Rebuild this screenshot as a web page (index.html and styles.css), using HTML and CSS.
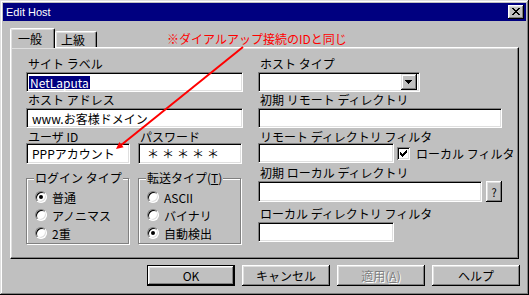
FILE: index.html
```html
<!DOCTYPE html>
<html lang="ja">
<head>
<meta charset="utf-8">
<title>Edit Host</title>
<link rel="stylesheet" href="styles.css">
</head>
<body>
<div class="window">
  <div class="titlebar">
    <span class="title">Edit Host</span>
    <span class="close-btn">
      <svg width="16" height="14" viewBox="0 0 16 14"><path fill="#000" d="M4 3h2v1h-2z M10 3h2v1h-2z M5 4h2v1h-2z M9 4h2v1h-2z M6 5h4v1h-4z M7 6h2v1h-2z M6 7h4v1h-4z M5 8h2v1h-2z M9 8h2v1h-2z M4 9h2v1h-2z M10 9h2v1h-2z"/></svg>
    </span>
  </div>
  <div class="client">
    <div class="tabs">
      <div class="tab tab-active">一般</div>
      <div class="tab tab-inactive">上級</div>
      <div class="note">※ダイアルアップ接続のIDと同じ</div>
    </div>
    <div class="panel">
      <div class="col">
        <div class="label">サイト ラベル</div>
        <div class="field"><span class="selected">NetLaputa</span></div>
        <div class="label">ホスト アドレス</div>
        <div class="field">www.お客様ドメイン</div>
        <div class="pair">
          <div class="label label-short half">ユーザ ID</div>
          <div class="label label-short half">パスワード</div>
        </div>
        <div class="pair">
          <div class="field field-tall half">PPPアカウント</div>
          <div class="field field-tall half password">＊＊＊＊＊</div>
        </div>
        <div class="pair groups">
          <div class="group half">
            <span class="group-title">ログイン タイプ</span>
            <div class="options">
              <div class="option"><span class="radio checked"></span>普通</div>
              <div class="option"><span class="radio"></span>アノニマス</div>
              <div class="option"><span class="radio"></span>2重</div>
            </div>
          </div>
          <div class="group half">
            <span class="group-title">転送タイプ(<u>T</u>)</span>
            <div class="options">
              <div class="option"><span class="radio"></span>ASCII</div>
              <div class="option"><span class="radio"></span>バイナリ</div>
              <div class="option"><span class="radio checked"></span>自動検出</div>
            </div>
          </div>
        </div>
      </div>
      <div class="col">
        <div class="label">ホスト タイプ</div>
        <div class="field combo">
          <span class="combo-btn">
            <svg width="16" height="16" viewBox="0 0 16 16"><path fill="#000" d="M4 6h7v1h-7z M5 7h5v1h-5z M6 8h3v1h-3z M7 9h1v1h-1z"/></svg>
          </span>
        </div>
        <div class="label">初期 リモート ディレクトリ</div>
        <div class="field"></div>
        <div class="label label-short">リモート ディレクトリ フィルタ</div>
        <div class="inline-row">
          <div class="field short"></div>
          <span class="checkbox">
            <svg width="13" height="13" viewBox="0 0 13 13"><path fill="#000" d="M9 3h1v1h-1z M8 4h2v1h-2z M3 5h1v1h-1z M7 5h3v1h-3z M3 6h2v1h-2z M6 6h3v1h-3z M3 7h5v1h-5z M4 8h3v1h-3z M5 9h1v1h-1z"/></svg>
          </span>
          <span class="check-label">ローカル フィルタ</span>
        </div>
        <div class="label label-gap">初期 ローカル ディレクトリ</div>
        <div class="inline-row">
          <div class="field local-dir"></div>
          <span class="btn small-btn">?</span>
        </div>
        <div class="label label-gap2">ローカル ディレクトリ フィルタ</div>
        <div class="field short"></div>
      </div>
    </div>
    <div class="buttons">
      <span class="btn btn-default">OK</span>
      <span class="btn">キャンセル</span>
      <span class="btn btn-disabled">適用(<u>A</u>)</span>
      <span class="btn">ヘルプ</span>
    </div>
  </div>
  <svg class="annotation-arrow" width="529" height="295" viewBox="0 0 529 295">
    <line x1="243" y1="47" x2="121.5" y2="144.7" stroke="#ff0000" stroke-width="2"/>
    <polygon points="116,149 123.6,147.2 119.4,141.9" fill="#ff0000"/>
  </svg>
</div>
</body>
</html>
```

FILE: styles.css
```css
* { box-sizing: border-box; }
html, body { margin: 0; padding: 0; }
body {
  width: 529px;
  height: 295px;
  overflow: hidden;
  background: #c0c0c0;
  font-family: "Noto Sans CJK JP", "Noto Sans", sans-serif;
  font-size: 12px;
  color: #000;
}
.window {
  position: relative;
  width: 529px;
  height: 295px;
  padding: 3px;
  background: #c0c0c0;
  box-shadow: inset -1px -1px #000, inset 1px 1px #dfdfdf, inset -2px -2px #808080, inset 2px 2px #fff;
  display: flex;
  flex-direction: column;
}
.titlebar {
  height: 18px;
  flex: none;
  background: #000080;
  color: #fff;
  display: flex;
  align-items: center;
  padding: 0 2px 0 3px;
}
.title {
  font-family: "Liberation Sans", Arial, sans-serif;
  font-size: 11px;
  line-height: 18px;
}
.close-btn {
  margin-left: auto;
  width: 16px;
  height: 14px;
  display: block;
  background: #c0c0c0;
  box-shadow: inset -1px -1px #000, inset 1px 1px #fff, inset -2px -2px #808080, inset 2px 2px #dfdfdf;
}
.close-btn svg, .combo-btn svg, .checkbox svg { display: block; }
.client {
  flex: 1;
  display: flex;
  flex-direction: column;
  padding: 7px 7px 0 7px;
}
.tabs {
  height: 19px;
  flex: none;
  display: flex;
  align-items: flex-end;
}
.tab {
  background: #c0c0c0;
  border-left: 1px solid #fff;
  border-top: 1px solid #fff;
  border-right: 1px solid #000;
  border-radius: 2px 2px 0 0;
  box-shadow: inset -1px 0 #808080, inset 1px 1px #dfdfdf;
  white-space: nowrap;
}
.tab-active {
  width: 45px;
  height: 20px;
  margin-bottom: -1px;
  position: relative;
  z-index: 1;
  padding: 1px 0 0 7px;
  line-height: 17px;
}
.tab-inactive {
  width: 42px;
  height: 16px;
  padding-left: 5px;
  line-height: 15px;
}
.note {
  margin-left: 70px;
  line-height: 16px;
  color: #ff0000;
  white-space: nowrap;
}
.panel {
  height: 212px;
  flex: none;
  border: 1px solid;
  border-color: #fff #000 #000 #fff;
  box-shadow: inset -1px -1px #808080, inset 1px 1px #dfdfdf;
  padding: 8px 0 0 15px;
  display: grid;
  grid-template-columns: 217px 244px;
  column-gap: 15px;
  align-items: start;
}
.col {
  display: flex;
  flex-direction: column;
}
.label {
  height: 16px;
  line-height: 16px;
  padding-left: 2px;
  white-space: nowrap;
}
.label-short { height: 15px; line-height: 17px; }
.label-gap { margin-top: 2px; }
.label-gap2 { margin-top: 4px; }
.field {
  height: 20px;
  background: #fff;
  border: 1px solid;
  border-color: #808080 #fff #fff #808080;
  box-shadow: inset 1px 1px #000, inset -1px -1px #dfdfdf;
  padding-left: 5px;
  display: flex;
  align-items: center;
  white-space: nowrap;
  overflow: hidden;
}
.field-tall { height: 21px; }
.selected {
  margin-left: -3px;
  padding: 0 1px;
  height: 13px;
  line-height: 13px;
  background: #000080;
  color: #fff;
}
.pair {
  display: flex;
  gap: 8px;
}
.half { width: 104px; flex: none; }
.password {
  padding-left: 8px;
  letter-spacing: 3px;
}
.groups { margin-top: 14px; }
.group {
  height: 66px;
  border: 1px solid #808080;
  box-shadow: inset 1px 1px #fff, 1px 1px #fff;
  width: 103px;
}
.group + .group { margin-left: 1px; }
.group-title {
  display: block;
  width: max-content;
  margin: -8px 0 0 7px;
  padding: 0 1px;
  height: 14px;
  line-height: 14px;
  background: #c0c0c0;
  white-space: nowrap;
}
.options {
  margin-top: 3px;
  padding-left: 8px;
}
.option {
  height: 18px;
  display: flex;
  align-items: center;
  white-space: nowrap;
}
.radio {
  width: 12px;
  height: 12px;
  flex: none;
  margin-right: 5px;
  position: relative;
  border-radius: 50%;
  background: #fff;
  border: 1px solid;
  border-color: #808080 #fff #fff #808080;
  box-shadow: inset 1px 1px #000, inset -1px -1px #dfdfdf;
}
.radio.checked::after {
  content: "";
  position: absolute;
  left: 3px;
  top: 3px;
  width: 4px;
  height: 4px;
  border-radius: 50%;
  background: #000;
}
.combo {
  width: 162px;
  padding: 0 2px 0 0;
  justify-content: flex-end;
}
.combo-btn {
  width: 16px;
  height: 16px;
  display: block;
  background: #c0c0c0;
  box-shadow: inset -1px -1px #000, inset 1px 1px #dfdfdf, inset -2px -2px #808080, inset 2px 2px #fff;
}
.inline-row {
  display: flex;
  align-items: center;
}
.short { width: 136px; flex: none; }
.checkbox {
  width: 13px;
  height: 13px;
  margin-left: 3px;
  flex: none;
  background: #fff;
  box-shadow: inset 1px 1px #808080, inset -1px -1px #fff, inset 2px 2px #000, inset -2px -2px #dfdfdf;
}
.check-label {
  margin-left: 6px;
  white-space: nowrap;
}
.local-dir { width: 224px; height: 21px; flex: none; }
.btn {
  width: 88px;
  height: 21px;
  display: flex;
  align-items: center;
  justify-content: center;
  background: #c0c0c0;
  box-shadow: inset -1px -1px #000, inset 1px 1px #fff, inset -2px -2px #808080, inset 2px 2px #dfdfdf;
  white-space: nowrap;
}
.small-btn {
  width: 16px;
  height: 21px;
  margin-left: 4px;
  font-size: 11px;
}
.buttons {
  display: flex;
  justify-content: flex-end;
  gap: 7px;
  margin-top: 6px;
  margin-right: -1px;
}
.btn-default {
  border: 1px solid #000;
}
.btn-disabled {
  color: #808080;
  text-shadow: 1px 1px #fff;
}
.annotation-arrow {
  position: absolute;
  left: 0;
  top: 0;
  pointer-events: none;
}
```
